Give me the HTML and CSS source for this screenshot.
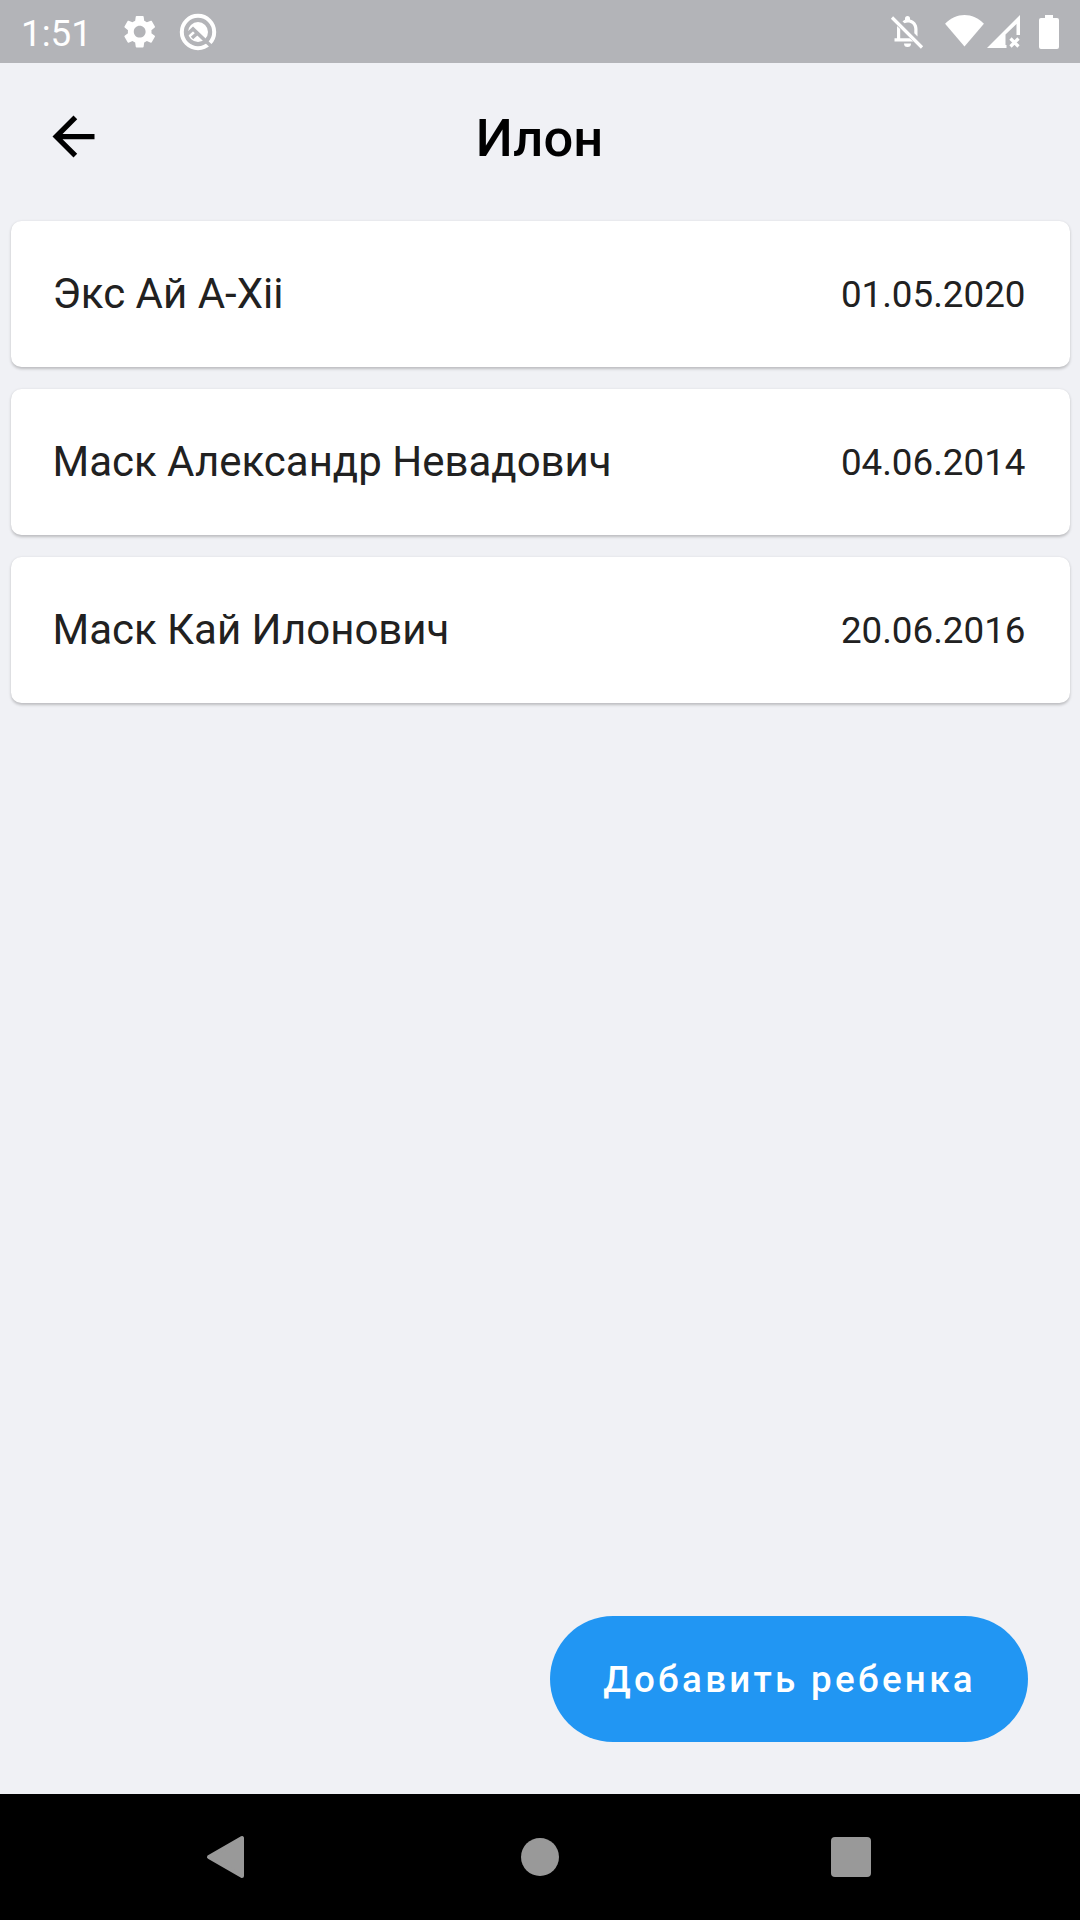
FILE: index.html
```html
<!DOCTYPE html>
<html lang="ru">
<head>
<meta charset="utf-8">
<title>Илон</title>
<link rel="stylesheet" href="styles.css">
</head>
<body>
<div class="status">
  <span class="clock">1:51</span>
  <svg class="gear" viewBox="0 0 24 24"><path d="M19.14 12.94c.04-.3.06-.61.06-.94 0-.32-.02-.64-.07-.94l2.03-1.58c.18-.14.23-.41.12-.61l-1.92-3.32c-.12-.22-.37-.29-.59-.22l-2.39.96c-.5-.38-1.03-.7-1.62-.94l-.36-2.54c-.04-.24-.24-.41-.48-.41h-3.84c-.24 0-.43.17-.47.41l-.36 2.54c-.59.24-1.13.57-1.62.94l-2.39-.96c-.22-.08-.47 0-.59.22L2.74 8.87c-.12.21-.08.47.12.61l2.03 1.58c-.05.3-.09.63-.09.94s.02.64.07.94l-2.03 1.58c-.18.14-.23.41-.12.61l1.92 3.32c.12.22.37.29.59.22l2.39-.96c.5.38 1.03.7 1.62.94l.36 2.54c.05.24.24.41.48.41h3.84c.24 0 .44-.17.47-.41l.36-2.54c.59-.24 1.13-.56 1.62-.94l2.39.96c.22.08.47 0 .59-.22l1.92-3.32c.12-.22.07-.47-.12-.61l-2.01-1.58zM12 15.6c-1.98 0-3.6-1.62-3.6-3.6s1.62-3.6 3.6-3.6 3.6 1.62 3.6 3.6-1.62 3.6-3.6 3.6z"/></svg>
  <svg class="android-q" viewBox="0 0 40 40"><circle class="ring" cx="20" cy="20" r="16.2"/><circle cx="20" cy="20" r="10"/><path class="cut" d="M9 22.500l6-5.500 19 18M14 26l5-4.500"/></svg>
  <span class="spacer"></span>
  <svg class="bell" viewBox="0 0 36 36"><path d="M13.500 7.500a9 9 0 0 1 2.500-1.700V4.500a2.500 2.500 0 0 1 5 0v1.100c4.500 1.100 7.500 4.600 7.500 9.500v7.400l-3.200-3.200V15c0-4-2.800-6.600-6.500-6.600-1.300 0-2.300.3-3.200.9z"/><path d="M8 12l3.200 3v9.200h9.500l3.500 3.300H5.500v-3.300H8zM15 29.500h7a3.500 3.500 0 0 1-7 0z"/><path class="line" d="M3 3.500l30 30"/></svg>
  <svg class="wifi" viewBox="0 0 40 34"><path d="M0 10C11-2 29-2 40 10L20 33.500z"/></svg>
  <svg class="cell" viewBox="0 0 34 34"><path d="M33 0v20h-3.500V9L18.500 19.500V30h1v3H0z"/><path class="line" d="M23.500 23.500l8 8m0-8l-8 8"/></svg>
  <svg class="battery" viewBox="0 0 20 34"><path d="M6 0h8v3h4a2 2 0 0 1 2 2v27a2 2 0 0 1-2 2H2a2 2 0 0 1-2-2V5a2 2 0 0 1 2-2h4z"/></svg>
</div>
<header class="toolbar">
  <svg class="back" viewBox="0 0 24 24"><path d="M20 11H7.830l5.590-5.590L12 4l-8 8 8 8 1.410-1.410L7.830 13H20v-2z"/></svg>
  <h1 class="title">Илон</h1>
</header>
<main class="content">
  <ul class="list">
    <li class="card"><span class="name">Экс Ай A-Xii</span><span class="date">01.05.2020</span></li>
    <li class="card"><span class="name">Маск Александр Невадович</span><span class="date">04.06.2014</span></li>
    <li class="card"><span class="name">Маск Кай Илонович</span><span class="date">20.06.2016</span></li>
  </ul>
  <button class="add" type="button">Добавить ребенка</button>
</main>
<nav class="navbar">
  <svg viewBox="0 0 42 44"><path class="tri" d="M3 22L36 3v38z"/></svg>
  <svg viewBox="0 0 42 44"><circle cx="21" cy="22" r="19"/></svg>
  <svg viewBox="0 0 42 44"><rect x="1" y="2" width="40" height="40" rx="4"/></svg>
</nav>
</body>
</html>
```
FILE: styles.css
```css
* { box-sizing: border-box; }
body {
  margin: 0;
  width: 1080px;
  height: 1920px;
  display: flex;
  flex-direction: column;
  background: #f0f1f5;
  color: #212121;
  font-family: Roboto, sans-serif;
}
svg { display: block; flex: none; }
.status {
  height: 63px;
  padding: 0 21px;
  display: flex;
  align-items: center;
  background: #b3b4b8;
  color: #fff;
  fill: #fff;
}
.clock { width: 99px; font-size: 36.75px; line-height: 43px; padding-top: 3px; }
.gear { width: 39.4px; height: 39.4px; }
.android-q { width: 40px; height: 40px; margin-left: 18.500px; }
.line, .ring { fill: none; stroke: #fff; stroke-width: 3.2; }
.ring { stroke-width: 4; }
.cut { fill: none; stroke: #b3b4b8; stroke-width: 3.6; }
.spacer { flex: 1; }
.bell { width: 36px; height: 36px; margin-right: 20px; }
.wifi { width: 39px; height: 33px; margin: 0 3px 2px 0; }
.cell { width: 34px; height: 34px; margin-right: 18px; }
.battery { width: 20px; height: 34px; }
.toolbar {
  height: 147px;
  padding: 0 42px;
  display: grid;
  grid-template-columns: 63px 1fr 63px;
  align-items: center;
}
.back { width: 63px; height: 63px; }
.title {
  margin: 0;
  padding: 2px 1px 0 0;
  text-align: center;
  font-size: 52.5px;
  font-weight: 500;
  line-height: 62px;
  color: #000;
}
.content { flex: 1; display: flex; flex-direction: column; padding: 11px 10.5px 52.5px; }
.list { margin: 0; padding: 0; list-style: none; display: flex; flex-direction: column; gap: 22px; }
.card {
  height: 146px;
  padding: 0 44px 0 42px;
  display: flex;
  align-items: center;
  justify-content: space-between;
  background: #fff;
  border-radius: 10.5px;
  box-shadow: 0 1.5px 3px rgba(0, 0, 0, .22);
}
.name { font-size: 42px; line-height: 50px; }
.date { padding-top: 2px; font-size: 36.75px; line-height: 44px; }
.add {
  margin: auto 42px 0 auto;
  width: 478px;
  height: 126px;
  padding: 3px 0 0 2px;
  border: 0;
  border-radius: 63px;
  background: #2196f3;
  color: #fff;
  font: 500 36.75px/44px Roboto, sans-serif;
  letter-spacing: 3.28px;
}
.navbar {
  height: 126px;
  padding: 0 208px;
  display: flex;
  align-items: center;
  justify-content: space-between;
  background: #000;
  fill: #999;
}
.navbar svg { width: 42px; height: 44px; }
.navbar svg:first-child { margin-left: -2px; margin-right: 2px; }
.tri { stroke: #999; stroke-width: 4; stroke-linejoin: round; }
```
